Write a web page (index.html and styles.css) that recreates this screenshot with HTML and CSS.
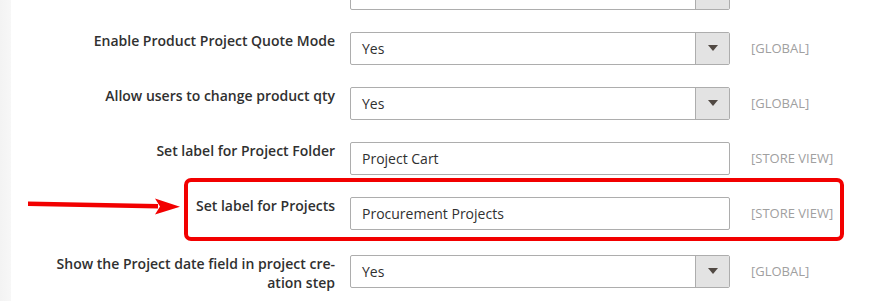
FILE: index.html
```html
<!DOCTYPE html>
<html lang="en">
<head>
    <meta charset="utf-8">
    <title>Configuration</title>
    <link rel="stylesheet" href="styles.css">
</head>
<body>
    <div class="page">
        <div class="sidebar"></div>
        <div class="content">
            <div class="fieldset">
                <!-- row cut off at the top of the screen -->
                <div class="row">
                    <div class="label"></div>
                    <div class="control">
                        <div class="select"><span class="select-value"></span><span class="select-btn"><i class="caret"></i></span></div>
                    </div>
                    <div class="scope"></div>
                </div>

                <div class="row">
                    <div class="label">Enable Product Project Quote Mode</div>
                    <div class="control">
                        <div class="select"><span class="select-value">Yes</span><span class="select-btn"><i class="caret"></i></span></div>
                    </div>
                    <div class="scope">[GLOBAL]</div>
                </div>

                <div class="row">
                    <div class="label">Allow users to change product qty</div>
                    <div class="control">
                        <div class="select"><span class="select-value">Yes</span><span class="select-btn"><i class="caret"></i></span></div>
                    </div>
                    <div class="scope">[GLOBAL]</div>
                </div>

                <div class="row">
                    <div class="label">Set label for Project Folder</div>
                    <div class="control">
                        <input type="text" class="text-input" value="Project Cart">
                    </div>
                    <div class="scope">[STORE VIEW]</div>
                </div>

                <div class="row row-marked">
                    <!-- annotation drawn over the row -->
                    <svg class="mark-arrow" width="156" height="21" viewBox="0 0 156 21">
                        <polygon points="2,5.4 132,8 132,12.6 2,9.9" fill="#f20000"/>
                        <polygon points="129,2.6 154,10.8 129,18.4 134,10.6" fill="#f20000"/>
                    </svg>
                    <div class="mark-box"></div>
                    <div class="label">Set label for Projects</div>
                    <div class="control">
                        <input type="text" class="text-input" value="Procurement Projects">
                    </div>
                    <div class="scope">[STORE VIEW]</div>
                </div>

                <div class="row">
                    <div class="label">Show the Project date field in project cre-<br>ation step</div>
                    <div class="control">
                        <div class="select"><span class="select-value">Yes</span><span class="select-btn"><i class="caret"></i></span></div>
                    </div>
                    <div class="scope">[GLOBAL]</div>
                </div>
            </div>
        </div>
    </div>
</body>
</html>
```

FILE: styles.css
```css
html,body{
    margin:0;
    padding:0;
    background:#fff;
}
body{
    font-family:"Open Sans","Liberation Sans",sans-serif;
    font-size:14px;
    color:#303030;
    overflow:hidden;
}
.page{
    display:flex;
    height:301px;
}
.sidebar{
    width:11px;
    flex:none;
    background:linear-gradient(to right,#f3f3f3,#f7f7f7);
}
.content{
    flex:1;
}
.fieldset{
    margin-top:-23px;
}
.row{
    display:flex;
    align-items:flex-start;
    margin-bottom:22px;
    position:relative;
}
.row-marked{
    margin-bottom:25px;
}
.label{
    width:324px;
    flex:none;
    text-align:right;
    font-weight:600;
    line-height:19px;
    margin-top:-1px;
}
.control{
    width:380px;
    flex:none;
    margin-left:15px;
}
.scope{
    margin-left:21px;
    font-size:13px;
    line-height:33px;
    color:#a0a0a0;
    white-space:nowrap;
}

/* inputs */
.text-input,
.select{
    box-sizing:border-box;
    width:100%;
    height:33px;
    border:1px solid #adadad;
    border-radius:2px;
    background:#fff;
}
.text-input{
    display:block;
    margin:0;
    padding:0 11px;
    font:14px "Open Sans","Liberation Sans",sans-serif;
    color:#303030;
    outline:none;
}
.select{
    display:flex;
}
.select-value{
    flex:1;
    padding-left:11px;
    line-height:31px;
}
.select-btn{
    width:33px;
    flex:none;
    border-left:1px solid #adadad;
    background:#e3e3e3;
    display:flex;
    align-items:center;
    justify-content:center;
}
.caret{
    width:0;
    height:0;
    border-left:5px solid transparent;
    border-right:5px solid transparent;
    border-top:6px solid #514943;
    margin-top:-1px;
}

/* red annotation */
.mark-box{
    position:absolute;
    left:173px;
    top:-19px;
    width:660px;
    height:63px;
    box-sizing:border-box;
    border:4px solid #f20000;
    border-radius:7px;
}
.mark-arrow{
    position:absolute;
    left:15px;
    top:-1px;
}
```
